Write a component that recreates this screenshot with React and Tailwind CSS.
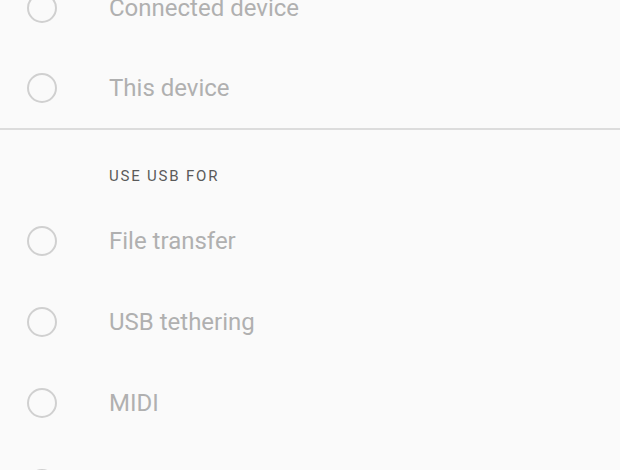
import React from "react";

function Row({ label, h = "h-[80px]" }) {
  return (
    <div className={`flex items-center ${h}`}>
      <div className="w-[109px] flex justify-start pl-[27px] shrink-0">
        <div className="w-[30px] h-[30px] rounded-full border-[2.5px] border-[#d0d0d0]" />
      </div>
      <span className="text-[24px] text-[#b0b0b0] leading-none">{label}</span>
    </div>
  );
}

export default function App() {
  return (
    <div
      className="w-[620px] h-[470px] overflow-hidden bg-[#fafafa]"
      style={{ fontFamily: "Roboto, 'Noto Sans', sans-serif" }}
    >
      <div className="-mt-[32px]">
        <Row label="Connected device" />
        <Row label="This device" />
        <div className="h-[2px] bg-[#dcdcdc]" />
        <div className="h-[70px] flex items-start pl-[109px] pt-[39px]">
          <span className="text-[15px] leading-none tracking-[0.12em] text-[#5a5a5a]">
            USE USB FOR
          </span>
        </div>
        <Row label="File transfer" h="h-[81px]" />
        <Row label="USB tethering" h="h-[81px]" />
        <Row label="MIDI" h="h-[81px]" />
        <Row label="PTP" h="h-[81px]" />
      </div>
    </div>
  );
}
